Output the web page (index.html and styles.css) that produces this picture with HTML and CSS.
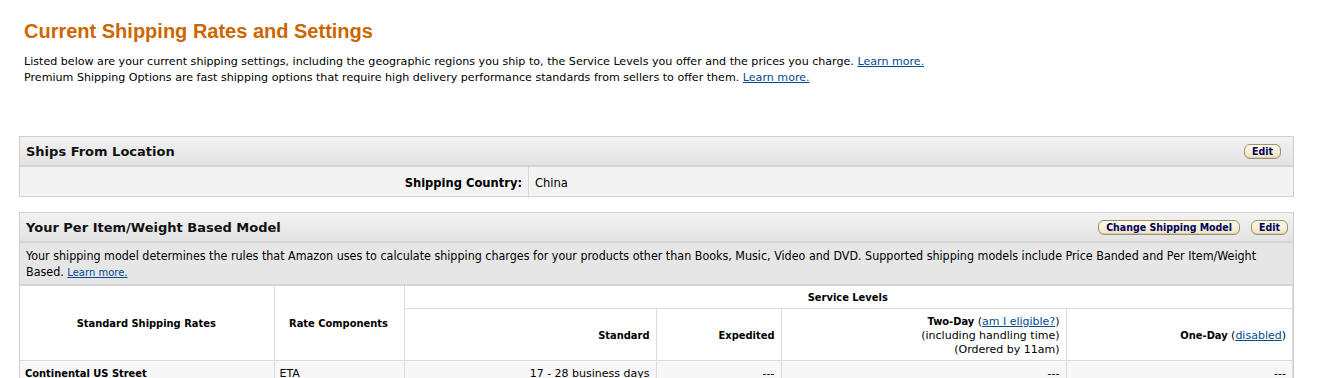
FILE: index.html
```html
<!DOCTYPE html>
<html>
<head>
<meta charset="utf-8">
<link rel="stylesheet" href="styles.css">
</head>
<body>
<div class="intro">
  <h1 class="title">Current Shipping Rates and Settings</h1>
  <p class="lead">Listed below are your current shipping settings, including the geographic regions you ship to, the Service Levels you offer and the prices you charge. <a href="#">Learn more.</a><br>
  Premium Shipping Options are fast shipping options that require high delivery performance standards from sellers to offer them. <a href="#">Learn more.</a></p>
</div>

<section class="panel">
  <div class="panel-head head-1">
    <h2 class="panel-title">Ships From Location</h2>
    <div class="btns"><span class="btn">Edit</span></div>
  </div>
  <div class="kv">
    <div class="kv-label">Shipping Country:</div>
    <div class="kv-value">China</div>
  </div>
</section>

<section class="panel panel-2">
  <div class="panel-head">
    <h2 class="panel-title">Your Per Item/Weight Based Model</h2>
    <div class="btns"><span class="btn">Change Shipping Model</span><span class="btn">Edit</span></div>
  </div>
  <div class="desc">Your shipping model determines the rules that Amazon uses to calculate shipping charges for your products other than Books, Music, Video and DVD. Supported shipping models include Price Banded and Per Item/Weight Based. <a href="#">Learn more.</a></div>
  <table class="rates">
    <colgroup>
      <col style="width:254px"><col style="width:130px"><col style="width:252px"><col style="width:125px"><col style="width:285px"><col>
    </colgroup>
    <tr class="h1">
      <th rowspan="2" class="c">Standard Shipping Rates</th>
      <th rowspan="2" class="c">Rate Components</th>
      <th colspan="4" class="c sl">Service Levels</th>
    </tr>
    <tr class="h2">
      <th class="r">Standard</th>
      <th class="r">Expedited</th>
      <th class="r two">Two-Day <span class="n">(<a href="#">am I eligible?</a>)</span><br><span class="n">(including handling time)</span><br><span class="n">(Ordered by 11am)</span></th>
      <th class="r">One-Day <span class="n">(<a href="#">disabled</a>)</span></th>
    </tr>
    <tr class="d">
      <td class="b">Continental US Street</td>
      <td>ETA</td>
      <td class="r">17 - 28 business days</td>
      <td class="r">---</td>
      <td class="r">---</td>
      <td class="r">---</td>
    </tr>
  </table>
</section>
</body>
</html>
```

FILE: styles.css
```css
html, body {
  margin: 0;
  padding: 0;
  background: #fff;
}
body {
  font-family: "DejaVu Sans", Verdana, sans-serif;
  font-size: 11px;
  color: #000;
}
a {
  color: #004b91;
  text-decoration: underline;
}
.intro {
  padding: 17px 24px 0 24px;
}
.title {
  margin: 0;
  font-family: "Liberation Sans", Arial, sans-serif;
  font-size: 20px;
  font-weight: bold;
  color: #cc6600;
  line-height: 28px;
}
.lead {
  margin: 9px 0 0 0;
  line-height: 16px;
  font-size: 11.1px;
}
.panel {
  margin: 50px 30px 0 19px;
  border: 1px solid #cfcfcf;
  border-bottom: 0;
}
.panel-2 {
  margin-top: 15px;
}
.panel-head {
  display: flex;
  align-items: center;
  justify-content: space-between;
  height: 28px;
  padding: 0 5px 0 6px;
  background: linear-gradient(#f2f2f2, #e3e3e3);
  border-bottom: 2px solid #d4d4d4;
}
.head-1 {
  padding-right: 12px;
}
.panel-title {
  margin: 0;
  font-size: 13px;
  font-weight: bold;
  color: #111;
}
.btns {
  display: flex;
  gap: 11px;
}
.btn {
  font-family: "DejaVu Sans Condensed", "DejaVu Sans", sans-serif;
  font-stretch: condensed;
  font-weight: bold;
  font-size: 10.5px;
  color: #000066;
  line-height: 13px;
  padding: 0 7px;
  border: 1px solid #9a9273;
  border-radius: 6px;
  background: linear-gradient(#fdfbe8, #eee6c2);
  box-shadow: inset 0 -1px 0 #d8cfa8;
}
.kv {
  display: grid;
  grid-template-columns: 509px 1fr;
  background: #f3f3f3;
  border-bottom: 1px solid #d4d4d4;
  height: 29px;
}
.kv-label {
  font-family: "DejaVu Sans Condensed", "DejaVu Sans", sans-serif;
  font-stretch: condensed;
  font-weight: bold;
  font-size: 12.8px;
  text-align: right;
  padding: 0 6px 0 0;
  line-height: 31px;
  border-right: 1px solid #d8d8d8;
}
.kv-value {
  font-family: "DejaVu Sans Condensed", "DejaVu Sans", sans-serif;
  font-stretch: condensed;
  font-size: 12.8px;
  line-height: 31px;
  padding-left: 6px;
}
.desc {
  background: #e6e6e6;
  padding: 5px 6px 4px 6px;
  line-height: 16px;
  font-family: "DejaVu Sans Condensed", "DejaVu Sans", sans-serif;
  font-stretch: condensed;
  font-size: 12.4px;
  border-bottom: 2px solid #d4d4d4;
}
.desc a {
  font-family: "DejaVu Sans", sans-serif;
  font-stretch: normal;
  font-size: 10px;
  line-height: 12px;
}
.rates {
  width: 100%;
  border-collapse: collapse;
  table-layout: fixed;
  font-size: 11px;
}
.rates th, .rates td {
  border: 1px solid #dcdcdc;
  padding: 0 6px 0 5px;
  vertical-align: middle;
}
.rates tr:first-child th {
  border-top: 0;
}
.rates th:first-child, .rates td:first-child {
  border-left: 0;
}
.rates th {
  font-family: "DejaVu Sans Condensed", "DejaVu Sans", sans-serif;
  font-stretch: condensed;
  font-size: 11px;
  font-weight: bold;
  background: #fff;
}
.rates .c {
  text-align: center;
}
.rates .r {
  text-align: right;
}
.rates .sl {
  height: 22px;
}
.rates .h2 th {
  height: 48px;
  line-height: 14px;
  padding-top: 3px;
}
.rates .n {
  font-family: "DejaVu Sans", sans-serif;
  font-stretch: normal;
  font-size: 11px;
  font-weight: normal;
}
.rates .d td {
  background: #f7f7f7;
  height: 22px;
  vertical-align: top;
  padding-top: 6px;
  line-height: 14px;
}
.rates .b {
  font-family: "DejaVu Sans Condensed", "DejaVu Sans", sans-serif;
  font-stretch: condensed;
  font-size: 11px;
  font-weight: bold;
}
```
